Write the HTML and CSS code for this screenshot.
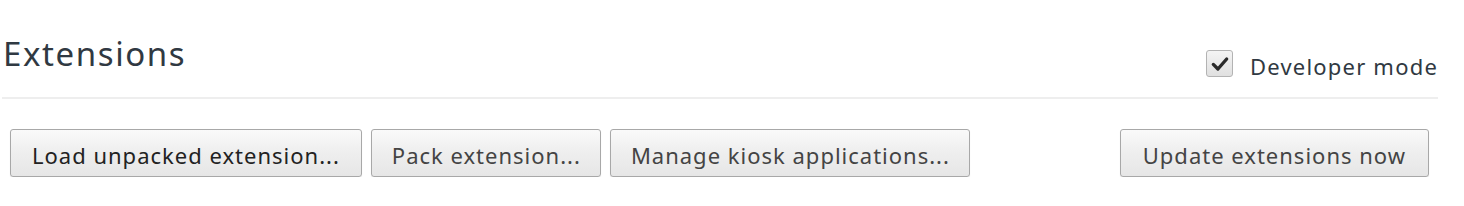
FILE: index.html
```html
<!DOCTYPE html>
<html>
<head>
<meta charset="utf-8">
<link rel="stylesheet" href="styles.css">
</head>
<body>
<div class="page">
  <header class="page-header">
    <h1 class="title">Extensions</h1>
    <label class="dev-toggle">
      <span class="checkbox">
        <svg viewBox="0 0 24 24" width="20" height="20"><path d="M4 12.5 L9.5 18 L20 6" fill="none" stroke="#2a2a2a" stroke-width="4" stroke-linecap="round" stroke-linejoin="round"/></svg>
      </span>
      <span class="dev-label">Developer mode</span>
    </label>
  </header>
  <div class="actions">
    <div class="left-actions">
      <button class="btn btn-primary">Load unpacked extension...</button>
      <button class="btn btn-pack">Pack extension...</button>
      <button class="btn btn-kiosk">Manage kiosk applications...</button>
    </div>
    <button class="btn btn-update">Update extensions now</button>
  </div>
</div>
</body>
</html>
```
FILE: styles.css
```css
html, body {
  margin: 0;
  padding: 0;
  background: #fff;
}
body {
  font-family: "Noto Sans", "Open Sans", sans-serif;
  color: #303942;
}
.page {
  width: 1436px;
  margin-left: 2px;
}
.page-header {
  display: flex;
  justify-content: space-between;
  align-items: flex-end;
  height: 97px;
  border-bottom: 2px solid #eeeeee;
}
.title {
  margin: 0 0 0 1px;
  font-size: 33px;
  font-weight: 400;
  letter-spacing: 1.6px;
  line-height: 44px;
  padding-bottom: 21px;
  color: #303942;
}
.dev-toggle {
  display: flex;
  align-items: center;
  padding-bottom: 16px;
}
.checkbox {
  width: 25px;
  height: 25px;
  border: 1px solid #b3b3b3;
  border-radius: 3px;
  background: linear-gradient(#f4f4f4, #e0e0e0);
  display: flex;
  align-items: center;
  justify-content: center;
  box-sizing: content-box;
  margin: 0 17px 4px 0;
}
.dev-label {
  font-size: 22px;
  letter-spacing: 1.2px;
  line-height: 28px;
  color: #303942;
}
.actions {
  display: flex;
  justify-content: space-between;
  padding: 30px 9px 0 8px;
}
.left-actions {
  display: flex;
  gap: 9px;
}
.btn {
  font-family: "Noto Sans", "Open Sans", sans-serif;
  font-size: 22px;
  letter-spacing: 1px;
  height: 48px;
  padding: 4px 21px 0;
  border: 1px solid #a8a8a8;
  border-radius: 3px;
  background: linear-gradient(#fafafa, #f0f0f0 40%, #e6e6e6);
  box-shadow: 0 1px 1px rgba(0,0,0,0.1);
  color: #444;
}
.btn-primary {
  color: #222;
}
.btn-pack,
.btn-kiosk {
  padding-left: 20px;
  padding-right: 19px;
}
.btn-update {
  padding-left: 22px;
  padding-right: 22px;
}
```
